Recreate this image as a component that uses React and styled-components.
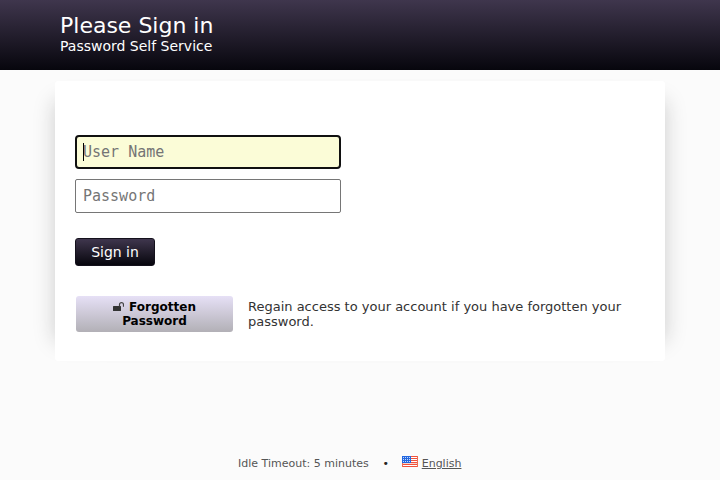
import React from "react";
import styled, { createGlobalStyle, css } from "styled-components";

const GlobalStyle = createGlobalStyle`
  * { box-sizing: border-box; }
  html, body { margin: 0; }
  body {
    background: #fbfbfb;
    font-family: "DejaVu Sans", sans-serif;
    color: #333;
    overflow: hidden;
  }
`;

const Page = styled.div`
  display: flex;
  flex-direction: column;
  height: 480px;
`;

const Header = styled.header`
  height: 70px;
  padding: 13px 60px 0;
  background: linear-gradient(to bottom, #3f364d 0%, #07060d 100%);
  color: #fff;
`;

const Title = styled.h1`
  margin: 0;
  font-size: 22px;
  font-weight: 400;
  line-height: 25px;
`;

const Subtitle = styled.div`
  font-size: 14px;
  line-height: 16px;
`;

const Card = styled.main`
  width: 610px;
  height: 280px;
  margin: 11px auto 0;
  padding: 54px 20px 0;
  border-radius: 3px;
  background: #fff;
  box-shadow: 20px 0 20px -20px #ccc, -20px 0 20px -20px #ccc;
`;

const Form = styled.form`
  display: flex;
  flex-direction: column;
  align-items: flex-start;
`;

const FieldWrap = styled.div`
  position: relative;
  display: flex;
  margin-bottom: 10px;
`;

const Field = styled.input`
  width: 266px;
  height: 34px;
  margin: 0;
  padding: 0 7px;
  border: 1px solid #767676;
  border-radius: 2px;
  background: #fff;
  color: #000;
  caret-color: transparent;
  font: 15px "DejaVu Sans Mono", monospace;
  outline: none;

  &::placeholder { color: #757575; }

  &:focus {
    padding: 0 6px;
    border: 2px solid #101010;
    border-radius: 4px;
    background: #fbfcd7;
  }
`;

const Caret = styled.span`
  position: absolute;
  left: 8px;
  top: 8px;
  width: 1px;
  height: 18px;
  background: #000;
  display: none;

  ${Field}:focus + & { display: block; }
`;

const buttonReset = css`
  border: 0;
  border-radius: 3px;
  font-family: inherit;
  padding: 0;
`;

const SubmitButton = styled.button`
  ${buttonReset}
  width: 80px;
  height: 28px;
  margin-top: 15px;
  border: 1px solid #14111c;
  background: linear-gradient(to bottom, #3f364d, #07060d);
  color: #fff;
  font-size: 14px;
`;

const Option = styled.div`
  display: grid;
  grid-template-columns: 157px 380px;
  column-gap: 15px;
  margin: 30px 0 0 1px;
`;

const OptionButton = styled.button`
  ${buttonReset}
  height: 36px;
  padding: 0 30px;
  background: linear-gradient(to bottom, #e6e0f6, #b2b0b6);
  color: #000;
  font-size: 12px;
  font-weight: 700;
  line-height: 14px;
`;

const LockIcon = styled.svg`
  width: 11px;
  height: 9px;
  margin-right: 5px;
`;

const Description = styled.p`
  margin: 3px 0 0;
  font-size: 13px;
  line-height: 15px;
`;

const Footer = styled.footer`
  display: flex;
  align-items: center;
  height: 16px;
  margin: auto 0 9px 238px;
  font-size: 11px;
  color: #555;
`;

const Bullet = styled.span`
  width: 33px;
  padding-left: 1px;
  text-align: center;
  color: #222;
`;

const FlagIcon = styled.svg`
  width: 16px;
  height: 11px;
  margin: -4px 4px 0 0;
`;

const Language = styled.a`
  text-decoration: underline;
`;

function UnlockedLock() {
  return (
    <LockIcon viewBox="0 0 11 9" aria-hidden="true">
      <rect x="0" y="4" width="8" height="5" rx="0.5" fill="#333" />
      <path d="M6.5 4.3V2.7a2 2 0 0 1 4 0v2" fill="none" stroke="#444" strokeWidth="1.2" />
    </LockIcon>
  );
}

function Flag() {
  return (
    <FlagIcon viewBox="0 0 16 11" aria-hidden="true" shapeRendering="crispEdges">
      <rect width="16" height="11" fill="#fff" />
      {[0, 2, 4, 6, 8, 10].map((y) => (
        <rect key={y} y={y} width="16" height="1" fill="#f0523c" />
      ))}
      <rect y="7" width="16" height="1" fill="#fbd5cc" />
      <rect x="15" width="1" height="11" fill="#ee6a54" />
      <rect y="7" width="1" height="4" fill="#ee6a54" />
      <rect width="9" height="7" fill="#2468e0" />
      {[1, 3, 5].map((y) =>
        [1, 3, 5, 7].map((x) => (
          <rect key={`${x}-${y}`} x={x} y={y} width="1" height="1" fill="#c6d9fb" />
        ))
      )}
    </FlagIcon>
  );
}

export default function App() {
  return (
    <Page>
      <GlobalStyle />
      <Header>
        <Title>Please Sign in</Title>
        <Subtitle>Password Self Service</Subtitle>
      </Header>
      <Card>
        <Form onSubmit={(e) => e.preventDefault()}>
          <FieldWrap>
            <Field type="text" placeholder="User Name" autoFocus />
            <Caret />
          </FieldWrap>
          <FieldWrap>
            <Field type="password" placeholder="Password" />
          </FieldWrap>
          <SubmitButton type="submit">Sign in</SubmitButton>
        </Form>
        <Option>
          <OptionButton type="button">
            <UnlockedLock />
            Forgotten Password
          </OptionButton>
          <Description>
            Regain access to your account if you have forgotten your password.
          </Description>
        </Option>
      </Card>
      <Footer>
        <span>Idle Timeout: 5 minutes</span>
        <Bullet>•</Bullet>
        <Flag />
        <Language>English</Language>
      </Footer>
    </Page>
  );
}
